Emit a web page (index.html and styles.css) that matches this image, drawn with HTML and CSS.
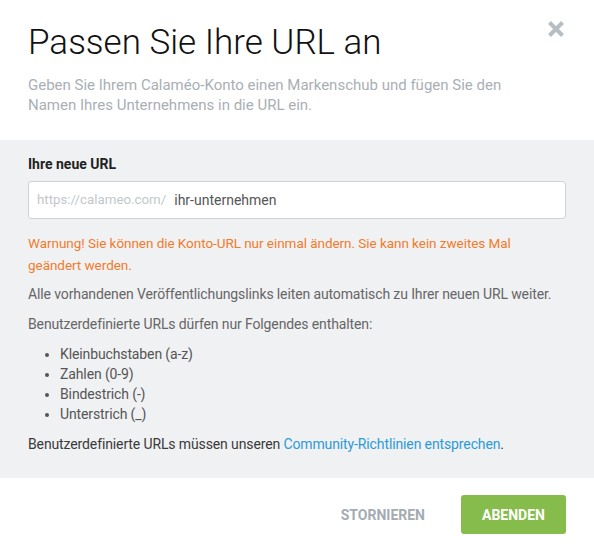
FILE: index.html
```html
<!DOCTYPE html>
<html lang="de">
<head>
    <meta charset="UTF-8">
    <meta name="viewport" content="width=device-width, initial-scale=1.0">
    <title>Passen Sie Ihre URL an</title>
    <link rel="stylesheet" href="styles.css">
</head>
<body>
    <div class="modal">
        <div class="modal-header">
            <h1>Passen Sie Ihre URL an</h1>
            <p class="intro">Geben Sie Ihrem Calaméo-Konto einen Markenschub und fügen Sie den Namen Ihres Unternehmens in die URL ein.</p>
            <button class="close-btn" aria-label="Schließen">
                <svg width="18" height="18" viewBox="0 0 18 18"><path d="M2.5 2.5 L15.5 15.5 M15.5 2.5 L2.5 15.5" stroke="#b6bdc3" stroke-width="4" stroke-linecap="butt"/></svg>
            </button>
        </div>
        <div class="modal-body">
            <label class="field-label" for="urlInput">Ihre neue URL</label>
            <div class="url-field">
                <span class="url-prefix">https://calameo.com/</span>
                <input type="text" id="urlInput" value="ihr-unternehmen">
            </div>
            <p class="warning">Warnung! Sie können die Konto-URL nur einmal ändern. Sie kann kein zweites Mal geändert werden.</p>
            <p class="after-warning">Alle vorhandenen Veröffentlichungslinks leiten automatisch zu Ihrer neuen URL weiter.</p>
            <p>Benutzerdefinierte URLs dürfen nur Folgendes enthalten:</p>
            <ul>
                <li>Kleinbuchstaben (a-z)</li>
                <li>Zahlen (0-9)</li>
                <li>Bindestrich (-)</li>
                <li>Unterstrich (_)</li>
            </ul>
            <p class="rules">Benutzerdefinierte URLs müssen unseren <a href="#">Community-Richtlinien entsprechen</a>.</p>
        </div>
        <div class="modal-footer">
            <button class="cancel-btn">Stornieren</button>
            <button class="submit-btn">Abenden</button>
        </div>
    </div>
</body>
</html>
```

FILE: styles.css
```css
body {
    margin: 0;
    padding: 0;
    background-color: #fff;
    font-family: Roboto, "Liberation Sans", Arial, sans-serif;
    color: #666;
}
.modal {
    width: 594px;
}
.modal-header {
    position: relative;
    padding: 22px 28px 0 28px;
    height: 118px;
}
.modal-header h1 {
    margin: 0;
    font-size: 35px;
    line-height: 42px;
    font-weight: 300;
    color: #111;
}
.intro {
    margin: 11px 0 0 0;
    max-width: 520px;
    font-size: 15px;
    line-height: 20px;
    color: #a9afb4;
}
.close-btn {
    position: absolute;
    top: 20px;
    right: 29px;
    padding: 0;
    border: none;
    background: none;
    cursor: pointer;
    line-height: 0;
}
.modal-body {
    background-color: #f0f1f3;
    padding: 14px 28px 24px 28px;
    font-size: 14px;
    line-height: 20px;
}
.field-label {
    display: block;
    font-size: 14px;
    font-weight: 700;
    color: #222;
}
.url-field {
    display: flex;
    align-items: center;
    margin-top: 7px;
    height: 38px;
    background-color: #fff;
    border: 1px solid #cfd3d6;
    border-radius: 3px;
    padding-left: 8px;
    box-sizing: border-box;
}
.url-prefix {
    color: #c3c7cb;
    font-size: 13.3px;
    margin-right: 8px;
}
.url-field input {
    flex: 1;
    border: none;
    outline: none;
    padding: 0;
    font-family: inherit;
    font-size: 14px;
    color: #555;
    background: transparent;
}
.modal-body p,
.modal-body ul {
    letter-spacing: -0.12px;
}
.modal-body p {
    margin: 10px 0 0 0;
}
.modal-body .warning {
    margin-top: 13px;
    max-width: 505px;
    font-size: 13.5px;
    letter-spacing: -0.05px;
    color: #f37b2a;
    line-height: 22px;
}
.modal-body .after-warning {
    margin-top: 8px;
}
.modal-body ul {
    margin: 10px 0 0 0;
    padding-left: 32px;
    color: #555;
}
.modal-body .rules {
    color: #3a3a3a;
}
.rules a {
    color: #2d9bd6;
    text-decoration: none;
}
.modal-footer {
    display: flex;
    justify-content: flex-end;
    align-items: center;
    padding: 17px 28px 0 0;
}
.cancel-btn,
.submit-btn {
    font-family: inherit;
    font-size: 14px;
    font-weight: 700;
    text-transform: uppercase;
    border: none;
    cursor: pointer;
    height: 39px;
}
.cancel-btn {
    background: none;
    color: #a4abb2;
    margin-right: 30px;
}
.submit-btn {
    width: 105px;
    background-color: #86bc4c;
    color: #fff;
    border-radius: 3px;
}
```
